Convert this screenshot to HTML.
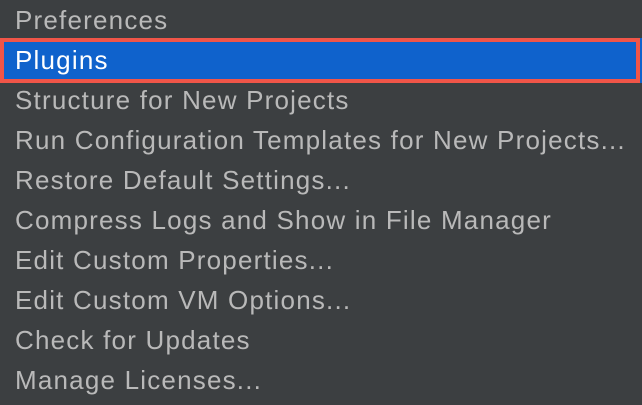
<!DOCTYPE html>
<html><head><style>
html,body{margin:0;padding:0;width:642px;height:404px;overflow:hidden;background:#3c3f41;}
.r{position:absolute;left:15px;height:40px;line-height:40px;font:26px "Liberation Sans",sans-serif;color:#b9b9b9;white-space:nowrap;letter-spacing:1.2px;margin-top:5px}
.sel{position:absolute;left:0;top:38px;width:642px;height:45px;background:#0f62cc;}
.box{position:absolute;left:0;top:38px;width:632px;height:37px;border:4px solid #f05548;}
</style></head><body>
<div class="sel"></div><div class="box"></div>
<div class="r" style="top:0">Preferences</div>
<div class="r" style="top:40px;color:#fff">Plugins</div>
<div class="r" style="top:80px">Structure for New Projects</div>
<div class="r" style="top:120px">Run Configuration Templates for New Projects...</div>
<div class="r" style="top:160px">Restore Default Settings...</div>
<div class="r" style="top:200px">Compress Logs and Show in File Manager</div>
<div class="r" style="top:240px">Edit Custom Properties...</div>
<div class="r" style="top:280px">Edit Custom VM Options...</div>
<div class="r" style="top:320px">Check for Updates</div>
<div class="r" style="top:360px">Manage Licenses...</div>
</body></html>
